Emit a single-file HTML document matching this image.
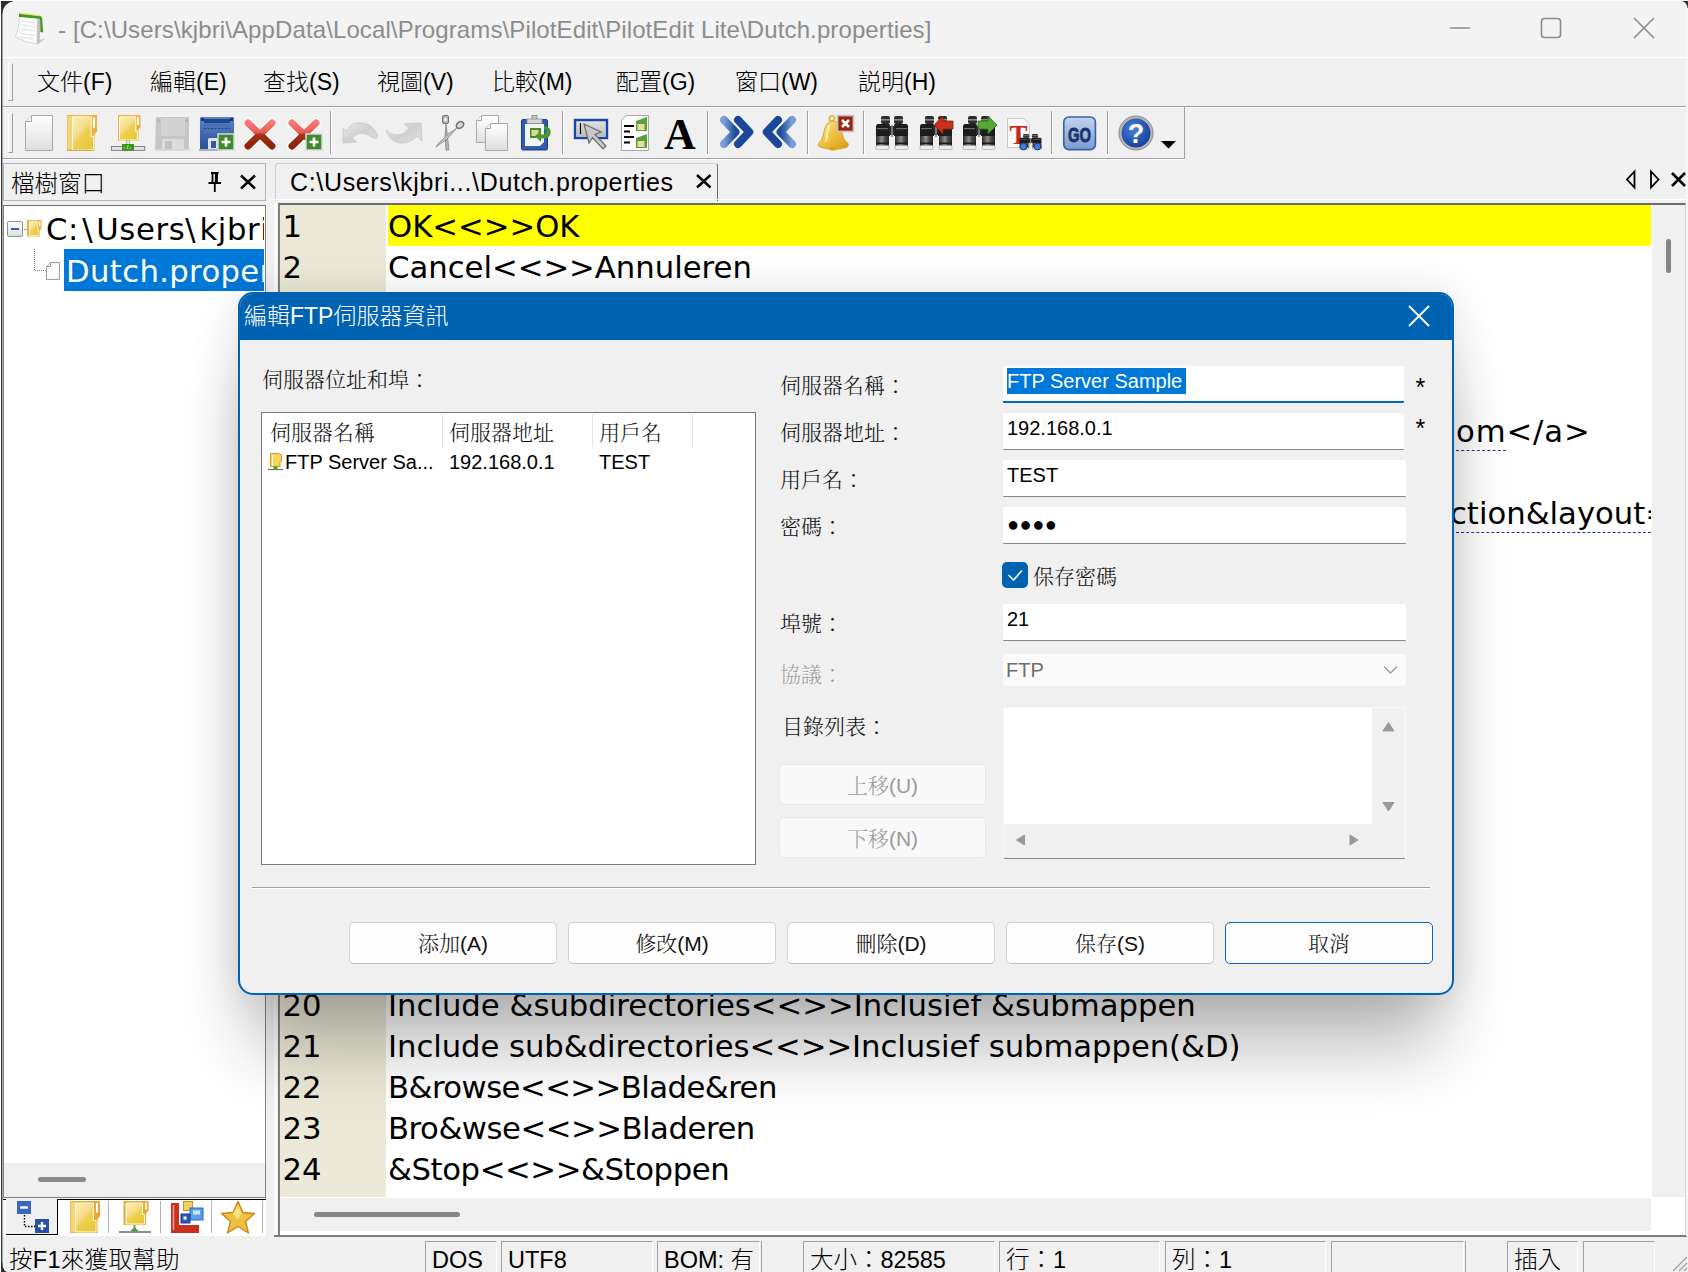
<!DOCTYPE html>
<html lang="zh-Hant">
<head>
<meta charset="utf-8">
<title>PilotEdit Lite - Dutch.properties</title>
<style>
*{box-sizing:border-box;margin:0;padding:0}
html,body{width:1688px;height:1272px;overflow:hidden;background:#f0f0f0}
body{position:relative;font-family:"Liberation Sans","Noto Sans CJK TC",sans-serif;color:#000;font-size:24px}
#win{position:absolute;left:0;top:0;width:1688px;height:1272px;overflow:hidden}
#win div,#win span.a,#win svg{position:absolute;white-space:pre}
#win svg{overflow:visible}
.r{position:absolute}
/* title bar */
#titlebar{left:0;top:0;width:1688px;height:57px;background:#f3f3f3}
#title{left:58px;top:16px;font-size:24px;letter-spacing:0.11px;color:#8c8c8c;line-height:28px}
#menubar{left:0;top:58px;width:1688px;height:48px;background:#f0f0f0}
.mi{top:67px;font-size:23px;line-height:30px;color:#000;font-weight:300}
.ed{font-family:"DejaVu Sans","Noto Sans CJK TC",sans-serif;font-size:30.7px;letter-spacing:0px;line-height:42px;height:42px;color:#000}
.dl{font-family:"Liberation Sans","Noto Serif CJK TC","Noto Serif CJK SC","Noto Sans CJK TC",serif;font-weight:300;font-size:21px;line-height:30px;color:#111}
.tah{font-family:"Liberation Sans","Noto Sans CJK TC",sans-serif;font-size:20px;line-height:26px;color:#000}
.st{top:1245px;font-size:23.5px;line-height:30px;color:#000;font-weight:300}
.pane{top:1241px;height:31px;border-left:1px solid #a0a0a0;border-top:1px solid #a0a0a0;border-right:1px solid #fff}
.sep{top:111px;width:2px;height:43px;border-left:1px solid #a0a0a0;border-right:1px solid #fff}
.inp{background:#fff;border-bottom:1px solid #868686;border-radius:2px 2px 1px 1px}
.btn{height:42px;width:208px;top:922px;background:#fdfdfd;border:1px solid #d2d2d2;border-bottom-color:#bdbdbd;border-radius:5px;text-align:center}
.btn span,.dbtn span{position:relative;top:1px;font-family:"Liberation Sans","Noto Serif CJK TC","Noto Serif CJK SC","Noto Sans CJK TC",serif;font-weight:300;font-size:21px;line-height:39px;color:#111}
.dbtn{height:41px;width:207px;left:779px;background:#f9f9f9;border:1px solid #e8e8e8;border-radius:5px;text-align:center}
.dbtn span{color:#9a9a9a}
</style>
</head>
<body>
<div id="win">
<!-- window chrome -->
<div id="titlebar"></div>
<svg style="left:0;top:0" width="60" height="57" viewBox="0 0 60 57">
  <path d="M38 40 L45.500 38.500 L38.500 44.300 Z" fill="#cfcfcf"/>
  <path d="M19.400 16 L37.600 18 L37 44 Q26 43 15.300 36.600 Q19 30 19.400 16 Z" fill="#fdfdfd" stroke="#c4c4c4" stroke-width="0.700"/>
  <path d="M37.600 18 L40.200 17 L39.600 42.300 L37 44 Z" fill="#bdbdbd"/>
  <path d="M21.500 21 L26 21.500 L31 22.400 L35 23 M21.500 24.800 L27 25.600 L35 26.800 M21 29 L25 29.500 L30 30.400 L35 31 M20 33 L25 34 L35 35.500 M19.500 36.500 L25 37.600 L34 38.600" stroke="#d4d4d4" stroke-width="0.800" fill="none"/>
  <path d="M19 13.600 L40.800 16 L41 19 L37.600 18.600 L19 16.900 Z" fill="#3f9a22"/>
  <path d="M20 12.600 L40 15 L40 16.200 L20 13.900 Z" fill="#f0e070"/>
  <path d="M40 16.400 L42 17.200 L43.200 32.600 L40.400 32 Z" fill="#3f9a22"/>
</svg>
<div id="title">- [C:\Users\kjbri\AppData\Local\Programs\PilotEdit\PilotEdit Lite\Dutch.properties]</div>
<svg style="left:1440px;top:10px" width="230" height="40" viewBox="0 0 230 40" fill="none" stroke="#8a8a8a" stroke-width="1.6" stroke-linecap="round" stroke-linejoin="round">
  <path d="M10.5 18 H29.5"/>
  <rect x="101.5" y="8.5" width="19" height="19" rx="3"/>
  <path d="M194.5 8.5 L213.5 27.5 M213.5 8.5 L194.5 27.5"/>
</svg>
<div style="left:0;top:57px;width:1688px;height:1px;background:#fff"></div>
<div id="menubar"></div>
<div style="left:8px;top:63px;width:5px;height:38px;border:1px solid #fff;border-right-color:#a0a0a0;border-bottom-color:#a0a0a0"></div>
<div class="mi" style="left:37px">文件(F)</div>
<div class="mi" style="left:150px">編輯(E)</div>
<div class="mi" style="left:263px">查找(S)</div>
<div class="mi" style="left:377px">視圖(V)</div>
<div class="mi" style="left:492px">比較(M)</div>
<div class="mi" style="left:616px">配置(G)</div>
<div class="mi" style="left:735px">窗口(W)</div>
<div class="mi" style="left:858px">説明(H)</div>
<div style="left:0;top:106px;width:1688px;height:1px;background:#a0a0a0"></div>
<div style="left:0;top:107px;width:1688px;height:1px;background:#fff"></div>
<!-- window left/right edge -->
<!-- toolbar -->
<div style="left:0;top:158px;width:1185px;height:1px;background:#a0a0a0"></div>
<div style="left:0;top:159px;width:1185px;height:1px;background:#fff"></div>
<div style="left:1184px;top:107px;width:1px;height:52px;background:#a0a0a0"></div>
<div style="left:8px;top:113px;width:5px;height:40px;border:1px solid #fff;border-right-color:#a0a0a0;border-bottom-color:#a0a0a0"></div>
<div class="sep" style="left:330px"></div>
<div class="sep" style="left:562px"></div>
<div class="sep" style="left:707px"></div>
<div class="sep" style="left:807px"></div>
<div class="sep" style="left:863px"></div>
<div class="sep" style="left:1051px"></div>
<div class="sep" style="left:1107px"></div>
<svg style="left:0;top:107px" width="1190" height="52" viewBox="0 107 1190 52">
<defs>
<linearGradient id="gpage" x1="0" y1="0" x2="0" y2="1"><stop offset="0" stop-color="#ffffff"/><stop offset="1" stop-color="#dedede"/></linearGradient>
<linearGradient id="gfold" x1="0" y1="0" x2="1" y2="1"><stop offset="0" stop-color="#fdf0a0"/><stop offset="0.5" stop-color="#f3d868"/><stop offset="1" stop-color="#e4bc38"/></linearGradient>
<linearGradient id="gfold2" x1="0" y1="0" x2="0.7" y2="1"><stop offset="0" stop-color="#f9f2a8"/><stop offset="0.45" stop-color="#f5dc90"/><stop offset="0.62" stop-color="#eed050"/><stop offset="1" stop-color="#e6c838"/></linearGradient>
<linearGradient id="gred" x1="0" y1="0" x2="0" y2="1"><stop offset="0" stop-color="#f67878"/><stop offset="0.42" stop-color="#e85a50"/><stop offset="0.5" stop-color="#a63418"/><stop offset="1" stop-color="#8c2408"/></linearGradient>
<linearGradient id="gblue" x1="0" y1="0" x2="0" y2="1"><stop offset="0" stop-color="#5a84c8"/><stop offset="1" stop-color="#2c4f98"/></linearGradient>
<linearGradient id="ggrey" x1="0" y1="0" x2="0" y2="1"><stop offset="0" stop-color="#e0e0e0"/><stop offset="1" stop-color="#bcbcbc"/></linearGradient>
<linearGradient id="gchev" x1="0" y1="0" x2="1" y2="0"><stop offset="0" stop-color="#7aa0d8"/><stop offset="1" stop-color="#1c4a9c"/></linearGradient>
<linearGradient id="gchev2" x1="1" y1="0" x2="0" y2="0"><stop offset="0" stop-color="#7aa0d8"/><stop offset="1" stop-color="#1c4a9c"/></linearGradient>
<linearGradient id="gbell" x1="0" y1="0" x2="1" y2="1"><stop offset="0" stop-color="#fce8a0"/><stop offset="0.5" stop-color="#f0c040"/><stop offset="1" stop-color="#d89818"/></linearGradient>
<linearGradient id="gbin" x1="0" y1="0" x2="0" y2="1"><stop offset="0" stop-color="#2a2a2a"/><stop offset="0.6" stop-color="#484848"/><stop offset="0.8" stop-color="#b0b0b0"/><stop offset="1" stop-color="#e8e8e8"/></linearGradient>
<linearGradient id="gundo" x1="0" y1="0" x2="1" y2="1"><stop offset="0" stop-color="#ececec"/><stop offset="0.5" stop-color="#d0d0d0"/><stop offset="1" stop-color="#e0e0e0"/></linearGradient>
<linearGradient id="gbar" x1="0" y1="0" x2="1" y2="0"><stop offset="0" stop-color="#2c2c2c"/><stop offset="0.45" stop-color="#8c8c8c"/><stop offset="0.7" stop-color="#4a4a4a"/><stop offset="1" stop-color="#262626"/></linearGradient>
<linearGradient id="ggo" x1="0" y1="0" x2="0" y2="1"><stop offset="0" stop-color="#c4d4ec"/><stop offset="1" stop-color="#7c9cd0"/></linearGradient>
<radialGradient id="ghelp" cx="0.4" cy="0.35" r="0.7"><stop offset="0" stop-color="#4a80d8"/><stop offset="1" stop-color="#143c98"/></radialGradient>
<g id="bino">
 <rect x="6" y="1" width="9" height="8" rx="2" fill="#2c2c2c"/><rect x="19" y="1" width="9" height="8" rx="2" fill="#2c2c2c"/>
 <rect x="6" y="4" width="9" height="1.6" fill="#8a8a8a"/><rect x="19" y="4" width="9" height="1.6" fill="#8a8a8a"/>
 <path d="M3 9 H14 Q15 9 15 11 V21 H1 V12 Q1 9 3 9 Z" fill="#1c1c1c"/><path d="M20 9 H31 Q33 9 33 12 V21 H19 V11 Q19 9 20 9 Z" fill="#1c1c1c"/>
 <rect x="14" y="11" width="6" height="9" fill="#2a2a2a"/><rect x="16.2" y="10" width="1.6" height="12" fill="#8c8c8c"/>
 <rect x="2" y="13" width="11" height="1.2" fill="#6a6a6a"/><rect x="21" y="13" width="11" height="1.2" fill="#6a6a6a"/>
 <rect x="1" y="21" width="13" height="13" fill="url(#gbar)"/><rect x="20" y="21" width="13" height="13" fill="url(#gbar)"/>
 <rect x="1" y="27.5" width="13" height="1.6" fill="#1c1c1c"/><rect x="20" y="27.5" width="13" height="1.6" fill="#1c1c1c"/>
 <rect x="1" y="30.5" width="13" height="4" rx="1" fill="#ececec" stroke="#9c9c9c" stroke-width="0.6"/><rect x="20" y="30.5" width="13" height="4" rx="1" fill="#ececec" stroke="#9c9c9c" stroke-width="0.6"/>
</g>
<g id="plus"><rect x="0" y="0" width="16" height="16" fill="#3f8a2e" stroke="#d8d8d8" stroke-width="1.5"/><path d="M8 3.5 V12.5 M3.5 8 H12.5" stroke="#fff" stroke-width="2.6"/></g>
<g id="redx"><path d="M4 5 L28 28 M28 5 L4 28" stroke="#fff" stroke-width="10" stroke-linecap="round" opacity="0.85"/><path d="M4 5 L28 28 M28 5 L4 28" stroke="url(#gred)" stroke-width="7" stroke-linecap="round"/></g>
</defs>
<path d="M31.5 115.5 H52.5 V150.5 H25.5 V121.5 Z" fill="url(#gpage)" stroke="#a8a8a8"/><path d="M25.5 121.5 H31.5 V115.5" fill="#f4f4f4" stroke="#a8a8a8"/>
<path d="M67 115 H97 V131.5 L94.5 134 V150.5 H67 Z" fill="#eeb040"/><path d="M67.5 116 H72.5 V150 H67.5 Z" fill="#f6d47c"/><path d="M72.5 116.8 H91.2 V136.3 H93.6 V149.8 H72.5 Z" fill="url(#gfold2)" stroke="#fffbe0" stroke-width="1"/><rect x="93" y="117.5" width="2" height="10.5" fill="#fff"/><path d="M67 150.3 H94" stroke="#b08838" stroke-width="0.8"/>
<path d="M118 115 H140.5 V127.5 L138.5 129.5 V141 H118 Z" fill="#eeb040"/><path d="M119.5 116.8 H135.8 V131.3 H137.4 V140 H119.5 Z" fill="url(#gfold2)" stroke="#fffbe0" stroke-width="1"/><rect x="137.2" y="117" width="1.6" height="8" fill="#fff"/><rect x="126.3" y="141" width="3.4" height="5" fill="#f4f4f4" stroke="#a0a0a0" stroke-width="0.6"/><rect x="111.4" y="146.4" width="33.4" height="3.9" fill="#e4e4e4" stroke="#6a6a6a" stroke-width="0.8"/><rect x="122" y="144" width="12" height="6.7" fill="#3c9420"/><path d="M127.9 142.5 V149 M123.5 148 H132.5" stroke="#d0e870" stroke-width="1.2" stroke-dasharray="1.5 1.5"/>
<path d="M156 117 H189 V149 H155 Z" fill="#c6c6c6"/><rect x="161" y="118" width="24" height="18" fill="#d2d2d2"/><rect x="162" y="139" width="22" height="11" rx="2" fill="#dcdcdc"/><rect x="165" y="141" width="7" height="8" fill="#c2c2c2"/><rect x="157" y="119" width="3" height="3" fill="#b4b4b4"/><rect x="185" y="119" width="3" height="3" fill="#b4b4b4"/><path d="M155 150 H190" stroke="#d4d4d4" stroke-width="1.5"/>
<path d="M201 117 H233 Q234 117 234 118 V149 H200 V118 Q200 117 201 117 Z" fill="url(#gblue)"/><rect x="204" y="119" width="26" height="4" fill="#24458c"/><rect x="204" y="124" width="26" height="9" fill="#4870b4"/><path d="M204 128.5 H230" stroke="#24458c" stroke-width="1" stroke-dasharray="2 1.5"/><rect x="201" y="118" width="3" height="3" fill="#1c3878"/><rect x="230" y="118" width="3" height="3" fill="#1c3878"/><rect x="208" y="138" width="13" height="12" rx="1.5" fill="#dfe3ea"/><rect x="211" y="141" width="5" height="7" fill="#38589c"/><path d="M199 150 H222" stroke="#8a9cc0" stroke-width="1.5"/>
<use href="#plus" x="218" y="134"/>
<use href="#redx" x="244" y="118"/>
<use href="#redx" x="288" y="118"/><use href="#plus" x="306" y="134"/>
<path d="M343 128 L343 143 L357 142 L352 138 Q360 129 372 137 Q376 140 378 136 Q372 121 356 123 Q349 125 347 131 Z" fill="url(#gundo)" stroke="#c8c8c8" stroke-width="0.8"/>
<path d="M421 123 L422 141 L417 136 Q408 146 396 142 Q389 139 386 130 Q389 134 396 135 Q405 135 409 128 L404 124 Z" fill="url(#gundo)" stroke="#c8c8c8" stroke-width="0.8"/>
<rect x="442.5" y="115.5" width="6" height="8" rx="1.5" fill="#b8b8b8" stroke="#707070"/><rect x="444.5" y="118" width="2" height="3" fill="#fff"/><ellipse cx="460" cy="125" rx="4" ry="3" transform="rotate(-35 460 125)" fill="#d8d8d8" stroke="#707070" stroke-width="1.6"/><path d="M446 124 L447.5 136 L449 150 L446 150 L445 137 Z" fill="#b0b0b0" stroke="#808080" stroke-width="0.7"/><path d="M457 128 L448 134 L437 145 L436 147 L447 139 Z" fill="#c0c0c0" stroke="#808080" stroke-width="0.7"/>
<path d="M481.5 115.5 H498.5 V142.5 H476.5 V120.5 Z" fill="url(#gpage)" stroke="#a8a8a8"/><path d="M476.5 120.5 H481.5 V115.5" fill="#f4f4f4" stroke="#a8a8a8"/><path d="M490.5 123.5 H507.5 V150.5 H485.5 V128.5 Z" fill="url(#gpage)" stroke="#a8a8a8"/><path d="M485.5 128.5 H490.5 V123.5" fill="#f4f4f4" stroke="#a8a8a8"/>
<rect x="521.5" y="119.5" width="26" height="30.5" rx="1.5" fill="#2f5cab" stroke="#1c3c84"/><rect x="532" y="115.5" width="5" height="4" fill="#c8c8c8" stroke="#808080" stroke-width="0.8"/><rect x="527" y="119" width="15" height="4.5" fill="#d8d8d8" stroke="#909090" stroke-width="0.8"/><path d="M525 124 H544 V142 L540 146 H525 Z" fill="#f4f4f4"/><rect x="530" y="128" width="11" height="10" fill="#4a8c28"/><rect x="531.5" y="130" width="7" height="6" fill="#d8d8a0"/><path d="M544 126 Q552 127 550.5 134 Q549 139 541 138.5 L541 142 L535 136 L541 131 L541 134.5 Q546 135 546.5 132 Q547 129 544 129 Z" fill="#4a9a28"/>
<rect x="575" y="120" width="32" height="18" fill="#d8dce4" stroke="#1846a8" stroke-width="2.4"/><rect x="577" y="122" width="28" height="14" fill="url(#ggrey)"/><path d="M580.5 123 V134" stroke="#000" stroke-width="1.2"/><path d="M584 124 L601 132 L595 134.5 L606 146 L603 149 L592.5 137.5 L589 143 Z" fill="#c8c8c8" stroke="#6c6c6c" stroke-width="1.2"/>
<path d="M626 115.5 H648.5 V150.5 H621.5 V120.5 Z" fill="#fdfdfd" stroke="#a8a8a8"/><path d="M624 126 H634 M624 131.5 H630 M624 137 H634 M624 142.5 H630" stroke="#000" stroke-width="2"/><path d="M636 121 L647 117 V131 H636 Z" fill="#58a038"/><path d="M636 138 L647 134 V148 H636 Z" fill="#58a038"/><rect x="637.5" y="124" width="7" height="6" fill="#e8dca0"/><rect x="637.5" y="141" width="7" height="6" fill="#e8dca0"/>
<text x="680" y="149" text-anchor="middle" font-family="Liberation Serif,serif" font-weight="bold" font-size="44" fill="#000">A</text>
<path d="M724 120 L735.5 132 L724 144" fill="none" stroke="url(#gchev)" stroke-width="8" stroke-linecap="round" stroke-linejoin="round"/><path d="M738 120 L749.3 132 L738 144" fill="none" stroke="#1c4698" stroke-width="8" stroke-linecap="round" stroke-linejoin="round"/>
<path d="M792 120 L780.5 132 L792 144" fill="none" stroke="url(#gchev2)" stroke-width="8" stroke-linecap="round" stroke-linejoin="round"/><path d="M778 120 L766.7 132 L778 144" fill="none" stroke="#1c4698" stroke-width="8" stroke-linecap="round" stroke-linejoin="round"/>
<circle cx="832" cy="118.5" r="2.6" fill="none" stroke="#e8b838" stroke-width="1.8"/><path d="M827 124 Q832 119 837 122.500 Q841 126 842.500 135 Q843.500 140 848 143.500 Q849.500 146 846 147.500 Q833 151.500 820 147 Q817 145.500 818.500 143.500 Q822.500 140 823.500 134 Q824.500 127 827 124 Z" fill="url(#gbell)" stroke="#d8981c" stroke-width="0.8"/><path d="M829 125 Q827 133 826 142" stroke="#fff6c8" stroke-width="2" fill="none" opacity="0.8"/><ellipse cx="833" cy="148.5" rx="4" ry="2" fill="#e0a020"/><rect x="837.6" y="115.600" width="15.8" height="15.8" fill="#9c2410" stroke="#c4c4c4" stroke-width="1.6"/><path d="M842 120 L849 127 M849 120 L842 127" stroke="#fff" stroke-width="2.8"/>
<use href="#bino" x="875" y="115"/>
<use href="#bino" x="919" y="115"/><path d="M934 125 L943 116 V121 H953 V129 H943 V134 Z" fill="#c83020" stroke="#8c1808" stroke-width="0.8"/>
<use href="#bino" x="962" y="115"/><path d="M997 125 L988 116 V121 H978 V129 H988 V134 Z" fill="#58a838" stroke="#2c7018" stroke-width="0.8"/>
<path d="M1007.5 118.500 H1023.500 L1029.500 124.500 V147.500 H1007.500 Z" fill="#fafafa" stroke="#c8c8c8"/><text x="1018.5" y="143.500" text-anchor="middle" font-family="Liberation Serif,serif" font-weight="bold" font-size="27" fill="#c42818">T</text><g transform="translate(1019,133.500) scale(0.68 0.46)"><use href="#bino"/></g><circle cx="1023.5" cy="146.500" r="3.4" fill="#3c80d8" stroke="#183c78"/><circle cx="1037.5" cy="146.500" r="3.4" fill="#3c80d8" stroke="#183c78"/>
<rect x="1063.8" y="117" width="31.6" height="32.600" rx="5" fill="url(#ggo)" stroke="#3460a8" stroke-width="1.6"/><text x="1079.6" y="141.500" text-anchor="middle" font-family="Liberation Sans,sans-serif" font-weight="bold" font-size="21" fill="#1c3470" stroke="#1c3470" stroke-width="0.9" textLength="23" lengthAdjust="spacingAndGlyphs">GO</text>
<circle cx="1136" cy="133" r="17" fill="#b8b8b8" stroke="#888" stroke-width="1"/><circle cx="1136" cy="133" r="14.5" fill="url(#ghelp)"/><text x="1136" y="143" text-anchor="middle" font-family="Liberation Sans,sans-serif" font-weight="bold" font-size="27" fill="#fff">?</text>
<path d="M1161 141 H1176 L1168.5 148.5 Z" fill="#000"/>
</svg>
<!-- left panel: file tree -->
<div style="left:3px;top:163px;width:263px;height:38px;border:1px solid #b4b4b4;background:#f0f0f0"></div>
<div style="left:11px;top:168.5px;font-size:23.5px;line-height:30px;font-weight:300">檔樹窗口</div>
<svg style="left:204px;top:170px" width="56" height="24" viewBox="204 170 56 24" fill="none" stroke="#000">
  <path d="M211 173 H218.5 M212.5 173 V182.5 M217 173 V182.5 M215.8 173 V182.5 M208.5 183 H221 M214.8 183.5 V192" stroke-width="1.8"/>
  <path d="M241 175.5 L255 188.5 M255 175.5 L241 188.5" stroke-width="2.4"/>
</svg>
<div style="left:3px;top:205px;width:263px;height:993px;border:1px solid #828282;border-top-color:#6e6e6e;background:#fff"></div>
<div style="left:4px;top:1163px;width:261px;height:34px;background:#f0f0f0"></div>
<div style="left:38px;top:1177px;width:48px;height:5px;border-radius:3px;background:#8a8a8a"></div>
<!-- tree items -->
<svg style="left:4px;top:215px" width="62" height="70" viewBox="4 215 62 70">
  <defs><linearGradient id="tbx" x1="0" y1="0" x2="0" y2="1"><stop offset="0" stop-color="#ffffff"/><stop offset="1" stop-color="#dcdcdc"/></linearGradient><linearGradient id="tf2" x1="0" y1="0" x2="0.7" y2="1"><stop offset="0" stop-color="#f9f2a8"/><stop offset="0.45" stop-color="#f5dc90"/><stop offset="0.62" stop-color="#eed050"/><stop offset="1" stop-color="#e6c838"/></linearGradient><linearGradient id="tf" x1="0" y1="0" x2="1" y2="1"><stop offset="0" stop-color="#fdf0a0"/><stop offset="1" stop-color="#e4b838"/></linearGradient></defs>
  <path d="M22 229.5 H27 M34.5 249 V270.5 H46" stroke="#808080" stroke-width="1" stroke-dasharray="1 1" fill="none"/>
  <rect x="7.500" y="221.500" width="15" height="15" rx="1.500" fill="url(#tbx)" stroke="#919191"/>
  <path d="M11 229 H19" stroke="#3c5cb4" stroke-width="2"/>
  <path d="M27 220 H41.500 V228.500 L40 230 V236.500 H27 Z" fill="#eeb040"/>
  <path d="M29.500 221.500 H37.800 V230.300 H39 V235.500 H29.500 Z" fill="url(#tf2)" stroke="#fffbe0" stroke-width="0.800"/>
  <rect x="39.200" y="221.500" width="1.200" height="5" fill="#fff"/>
  <path d="M50.500 262.500 H59.500 V279.500 H46.500 V266.500 Z" fill="#fafafa" stroke="#9a9a9a"/>
  <path d="M46.500 266.500 H50.500 V262.500" fill="#eee" stroke="#9a9a9a"/>
</svg>
<div class="ed" style="left:46px;top:209px;width:218px;overflow:hidden;letter-spacing:0.6px">C<span style="margin-right:3.2px">:</span><span style="margin-right:3.2px">\</span>Users<span style="margin-right:3.2px">\</span>kjbri</div>
<div style="left:64px;top:249px;width:200px;height:42px;background:#0078d7"></div>
<div class="ed" style="left:66px;top:251px;width:198px;overflow:hidden;color:#fff;letter-spacing:0.35px">Dutch.properties</div>
<!-- bottom tabs of tree panel -->
<div style="left:4px;top:1199px;width:262px;height:37px;background:#fff"></div>
<div style="left:6px;top:1199px;width:52px;height:36px;border-bottom:1px solid #000;border-right:1px solid #000;background:#f0f0f0"></div><div style="left:2px;top:1199px;width:4px;height:1px;background:#000"></div>
<div style="left:57px;top:1199px;width:209px;height:1px;background:#000"></div>
<div style="left:108px;top:1201px;width:1px;height:32px;background:#b0b0b0"></div>
<div style="left:160px;top:1201px;width:1px;height:32px;background:#b0b0b0"></div>
<div style="left:211px;top:1201px;width:1px;height:32px;background:#b0b0b0"></div>
<div style="left:262px;top:1201px;width:1px;height:32px;background:#b0b0b0"></div>
<svg style="left:0;top:1198px" width="270" height="38" viewBox="0 1198 270 38">
  <rect x="17" y="1201" width="14" height="13" fill="#3868c0"/><path d="M20 1207.500 H28" stroke="#fff" stroke-width="2.400"/>
  <path d="M24.500 1215 V1226.500 H35" stroke="#000" stroke-width="1.400" stroke-dasharray="1.500 1.500" fill="none"/>
  <rect x="35" y="1219" width="14" height="14" fill="#2c50a8"/><path d="M38 1226 H46 M42 1222 V1230" stroke="#fff" stroke-width="2.400"/>
  <path d="M70 1201 H100 V1216.500 L97.500 1219 V1233 H70 Z" fill="#e8a838"/>
  <path d="M70.500 1202 H75 V1232.500 H70.500 Z" fill="#f6d47c"/>
  <path d="M75.500 1203 H93.500 V1220.500 H96 V1232 H75.500 Z" fill="url(#tf2)" stroke="#fffbe0" stroke-width="1"/>
  <rect x="96" y="1203" width="2" height="9.500" fill="#fff"/>
  <path d="M123.500 1201 H148.500 V1211 L146 1213.500 V1225 H123.500 Z" fill="#e8a838"/>
  <path d="M126 1203 H142.500 V1214.500 H144.500 V1224 H126 Z" fill="url(#tf2)" stroke="#fffbe0" stroke-width="1"/>
  <rect x="145" y="1202.500" width="1.800" height="7" fill="#fff"/>
  <path d="M119 1232 H151" stroke="#707070" stroke-width="1.600"/><path d="M134.500 1225 V1231" stroke="#909090" stroke-width="2"/><path d="M130.500 1231 L134.500 1227 L138.500 1231 Z" fill="#48a028"/>
  <path d="M171 1203 H179 V1225 H199 V1233 H171 Z" fill="#c83020"/><path d="M173.500 1205 V1230" stroke="#f0a090" stroke-width="1.500"/>
  <rect x="183.500" y="1201.500" width="9" height="9" fill="#f0d060" stroke="#c89020"/>
  <rect x="190" y="1208" width="13" height="12" fill="#58a0e8" stroke="#2c68c0"/><rect x="193" y="1210.500" width="7" height="4" fill="#d0e8ff"/>
  <rect x="181" y="1214" width="9" height="9" fill="#2c58c0" stroke="#183c90"/><rect x="183.500" y="1216.500" width="3" height="3" fill="#fff"/>
  <path d="M238 1201.500 L243 1212.500 L254.500 1213.500 L245.500 1221.500 L248.500 1233 L238 1226.500 L227.500 1233 L230.500 1221.500 L221.500 1213.500 L233 1212.500 Z" fill="#f0c040" stroke="#c88818" stroke-width="1.400" stroke-linejoin="round"/>
  <path d="M238 1205 L241.500 1213.500 L238 1220 L233 1214 Z" fill="#fbe690" opacity="0.800"/>
</svg>
<!-- document tab -->
<div style="left:275px;top:163px;width:443px;height:38px;border:1px solid #d0d0d0;border-right:1px solid #6c6c6c;border-bottom:none;background:#f0f0f0;border-radius:3px 3px 0 0"></div>
<div style="left:290px;top:167px;font-size:25px;letter-spacing:0.66px;line-height:30px">C:\Users\kjbri...\Dutch.properties</div>
<svg style="left:690px;top:170px" width="26" height="24" viewBox="690 170 26 24" fill="none" stroke="#000">
  <path d="M697 175 L710.500 187.500 M710.500 175 L697 187.500" stroke-width="2.400"/>
</svg>
<svg style="left:1620px;top:166px" width="68" height="28" viewBox="1620 166 68 28" fill="none" stroke="#000">
  <path d="M1634.500 171.500 V187.500 L1627 179.500 Z" stroke-width="1.800" stroke-linejoin="miter"/>
  <path d="M1651 171.500 V187.500 L1658.500 179.500 Z" stroke-width="1.800" stroke-linejoin="miter"/>
  <path d="M1672 173 L1685 186 M1685 173 L1672 186" stroke-width="2.600"/>
</svg>
<div style="left:270px;top:199px;width:1418px;height:1px;background:#fff"></div>
<!-- editor -->
<div style="left:278px;top:203px;width:1408px;height:1033px;border:2px solid #808080;border-right:1px solid #d4d4d4;border-bottom:1px solid #fff;border-top-color:#6c6c6c;background:#fff"></div>
<div style="left:274px;top:1235px;width:1413px;height:2px;background:#7c7c7c"></div><div style="left:274px;top:203px;width:3px;height:1032px;background:#fbfbfb"></div>
<div style="left:280px;top:205px;width:106px;height:992px;background:#ece9d8"></div>
<div style="left:388px;top:205px;width:1263px;height:41px;background:#ffff00"></div>
<!-- vertical scrollbar -->
<div style="left:1652px;top:205px;width:33px;height:992px;background:#f0f0f0"></div>
<div style="left:1666px;top:239px;width:5px;height:34px;border-radius:3px;background:#858585"></div>
<!-- horizontal scrollbar -->
<div style="left:280px;top:1198px;width:1371px;height:33px;background:#f0f0f0"></div>
<div style="left:314px;top:1212px;width:146px;height:5px;border-radius:3px;background:#858585"></div>

<!-- line numbers -->
<div class="ed" style="left:282.5px;top:206px">1</div>
<div class="ed" style="left:282.5px;top:247px">2</div>
<div class="ed" style="left:282.5px;top:985px">20</div>
<div class="ed" style="left:282.5px;top:1026px">21</div>
<div class="ed" style="left:282.5px;top:1067px">22</div>
<div class="ed" style="left:282.5px;top:1108px">23</div>
<div class="ed" style="left:282.5px;top:1149px">24</div>
<!-- text lines -->
<div class="ed" style="left:388px;top:206px">OK&lt;&lt;&gt;&gt;OK</div>
<div class="ed" style="left:388px;top:247px">Cancel&lt;&lt;&gt;&gt;Annuleren</div>
<div class="ed" style="left:1456px;top:411px;letter-spacing:0.9px">om&lt;/a&gt;</div>
<div style="left:1456px;top:450px;width:50px;height:0;border-top:1px dashed #2030a0"></div>
<div class="ed" style="left:1450px;top:493px;width:201px;overflow:hidden">ction&amp;layout=</div>
<div style="left:1456px;top:532px;width:195px;height:0;border-top:1px dashed #2030a0"></div>
<div class="ed" style="left:388px;top:985px">Include &amp;subdirectories&lt;&lt;&gt;&gt;Inclusief &amp;submappen</div>
<div class="ed" style="left:388px;top:1026px;letter-spacing:-0.06px">Include sub&amp;directories&lt;&lt;&gt;&gt;Inclusief submappen(&amp;D)</div>
<div class="ed" style="left:388px;top:1067px;letter-spacing:-0.53px">B&amp;rowse&lt;&lt;&gt;&gt;Blade&amp;ren</div>
<div class="ed" style="left:388px;top:1108px;letter-spacing:-0.46px">Bro&amp;wse&lt;&lt;&gt;&gt;Bladeren</div>
<div class="ed" style="left:388px;top:1149px;letter-spacing:-0.4px">&amp;Stop&lt;&lt;&gt;&gt;&amp;Stoppen</div>
<!-- status bar -->
<div style="left:0;top:1237px;width:1688px;height:35px;background:#f0f0f0"></div>
<div class="st" style="left:9px;letter-spacing:0.3px">按F1來獲取幫助</div>
<div class="pane" style="left:425px;width:72px"></div>
<div class="st" style="left:432px">DOS</div>
<div class="pane" style="left:501px;width:152px"></div>
<div class="st" style="left:508px">UTF8</div>
<div class="pane" style="left:657px;width:103px"></div>
<div style="left:761px;top:1241px;width:1px;height:31px;background:#a0a0a0"></div>
<div class="st" style="left:664px">BOM: 有</div>
<div class="pane" style="left:803px;width:192px"></div>
<div class="st" style="left:810px">大小：82585</div>
<div class="pane" style="left:999px;width:161px"></div>
<div class="st" style="left:1006px">行：1</div>
<div class="pane" style="left:1165px;width:161px"></div>
<div class="st" style="left:1172px">列：1</div>
<div class="pane" style="left:1331px;width:133px"></div>
<div style="left:1465px;top:1241px;width:1px;height:31px;background:#a0a0a0"></div>
<div class="pane" style="left:1507px;width:71px"></div>
<div class="st" style="left:1514px">插入</div>
<div class="pane" style="left:1583px;width:72px"></div>
<svg style="left:1670px;top:1254px" width="18" height="18" viewBox="0 0 18 18" fill="none" stroke="#a0a0a0" stroke-width="1.200">
  <path d="M17 3 L3 17 M17 9 L9 17 M17 14 L14 17"/>
</svg>
<!-- window edges -->
<div style="left:0;top:0;width:1px;height:1272px;background:#fff"></div>
<div style="left:0;top:0;width:1688px;height:1px;background:#fbfbfb"></div>
<div style="left:1px;top:8px;width:1px;height:1258px;background:#3a3a3a"></div>
<div style="left:2px;top:8px;width:1px;height:1258px;background:#a8a8a8"></div>
<div style="left:1686px;top:8px;width:2px;height:1228px;background:#f6f6f6"></div>
<svg style="left:0;top:0" width="16" height="16" viewBox="0 0 16 16"><path d="M1 1 H14 Q3.500 2.500 2.200 14 H1 Z" fill="#2e2e2e"/></svg>
<svg style="left:1676px;top:0" width="12" height="12" viewBox="0 0 12 12"><path d="M12 1 H6 Q11 2.500 11.500 8 H12 Z" fill="#2e2e2e"/></svg>
<svg style="left:0;top:1260px" width="12" height="12" viewBox="0 0 12 12"><path d="M1 12 H7 Q2.500 10.500 2.200 2 H1 Z" fill="#2e2e2e"/></svg>
<!-- FTP dialog -->
<div id="dlg" style="left:238px;top:292px;width:1216px;height:703px;border-radius:15px;background:#f0f0f0;border:2px solid #0063b1;box-shadow:0 0 46px rgba(0,0,0,0.12),0 66px 72px -14px rgba(0,0,0,0.27);overflow:hidden">
  <div style="left:-2px;top:-2px;width:1216px;height:48px;background:#0063b1"></div>
</div>
<div style="left:244px;top:301px;font-size:23px;line-height:30px;color:#fff;font-weight:300">編輯FTP伺服器資訊</div>
<svg style="left:1400px;top:298px" width="40" height="36" viewBox="1400 298 40 36" fill="none" stroke="#fff" stroke-width="1.800">
  <path d="M1409 306 L1429 326 M1429 306 L1409 326"/>
</svg>
<!-- left side -->
<div class="dl" style="left:262px;top:365px">伺服器位址和埠：</div>
<div style="left:261px;top:412px;width:495px;height:453px;background:#fff;border:1px solid #7a7a7a"></div>
<div class="dl" style="left:270px;top:418px">伺服器名稱</div>
<div class="dl" style="left:449px;top:418px">伺服器地址</div>
<div class="dl" style="left:599px;top:418px">用戶名</div>
<div style="left:442px;top:414px;width:1px;height:33px;background:#e5e5e5"></div>
<div style="left:592px;top:414px;width:1px;height:33px;background:#e5e5e5"></div>
<div style="left:692px;top:414px;width:1px;height:33px;background:#e5e5e5"></div>
<svg style="left:266px;top:452px" width="18" height="20" viewBox="266 452 18 20">
  <path d="M270.500 453.500 H279.500 L281.500 455 V461 L280 462.500 V466.500 H270.500 Z" fill="#f3d460" stroke="#d09828"/>
  <path d="M272.500 455 V466" stroke="#fff8d0"/>
  <path d="M268 469.500 H283" stroke="#707070" stroke-width="1.200"/><rect x="273.500" y="466.500" width="4" height="3" fill="#48a028"/>
</svg>
<div class="tah" style="left:285px;top:449px">FTP Server Sa...</div>
<div class="tah" style="left:449px;top:449px">192.168.0.1</div>
<div class="tah" style="left:599px;top:449px">TEST</div>
<!-- right side labels -->
<div class="dl" style="left:780px;top:371px">伺服器名稱：</div>
<div class="dl" style="left:780px;top:418px">伺服器地址：</div>
<div class="dl" style="left:780px;top:465px">用戶名：</div>
<div class="dl" style="left:780px;top:512px">密碼：</div>
<div class="dl" style="left:780px;top:609px">埠號：</div>
<div class="dl" style="left:780px;top:660px;color:#a0a0a0;text-shadow:1px 1px 0 #fff">協議：</div>
<div class="dl" style="left:782px;top:712px">目錄列表：</div>
<!-- inputs -->
<div class="inp" style="left:1003px;top:366px;width:400.5px;height:37px;border-bottom:2px solid #0067c0"></div>
<div style="left:1007px;top:368px;width:179px;height:26px;background:#0078d7"></div>
<div class="tah" style="left:1007px;top:368px;color:#fff">FTP Server Sample</div>
<div class="tah" style="left:1415.5px;top:374px;font-size:25px">*</div>
<div class="inp" style="left:1003px;top:413px;width:400.5px;height:37px"></div>
<div class="tah" style="left:1007px;top:415px">192.168.0.1</div>
<div class="tah" style="left:1415.5px;top:415px;font-size:25px">*</div>
<div class="inp" style="left:1003px;top:460px;width:403px;height:37px"></div>
<div class="tah" style="left:1007px;top:462px">TEST</div>
<div class="inp" style="left:1003px;top:507px;width:403px;height:37px"></div>
<div class="tah" style="left:1007px;top:511px;letter-spacing:0.5px">●●●●</div>
<div style="left:1002px;top:562px;width:26px;height:26px;border-radius:5px;background:#0063b1"></div>
<svg style="left:1002px;top:562px" width="26" height="26" viewBox="0 0 26 26" fill="none" stroke="#fff" stroke-width="1.600" stroke-linecap="round" stroke-linejoin="round">
  <path d="M7 13.500 L11.500 18 L19.500 9"/>
</svg>
<div class="dl" style="left:1033px;top:562px">保存密碼</div>
<div class="inp" style="left:1003px;top:604px;width:403px;height:37px"></div>
<div class="tah" style="left:1007px;top:606px">21</div>
<div style="left:1003px;top:654px;width:403px;height:32px;background:#fafafa;border-radius:3px"></div>
<div class="tah" style="left:1006px;top:657px;color:#6d6d6d">FTP</div>
<svg style="left:1380px;top:662px" width="20" height="16" viewBox="1380 662 20 16" fill="none" stroke="#9a9a9a" stroke-width="1.300">
  <path d="M1384 666.500 L1390.500 673 L1397 666.500"/>
</svg>
<!-- directory list -->
<div style="left:1003px;top:707px;width:403px;height:152px;background:#f0f0f0;border:1px solid #f8f8f8;border-bottom:1px solid #868686;border-radius:3px"></div>
<div style="left:1004px;top:708px;width:368px;height:116px;background:#fff"></div>
<svg style="left:1003px;top:707px" width="403" height="152" viewBox="1003 707 403 152" fill="#9a9a9a">
  <path d="M1383 731 L1388.500 722.500 L1394 731 Z" stroke="#9a9a9a" stroke-width="1" stroke-linejoin="round"/>
  <path d="M1383 802.500 L1388.500 811 L1394 802.500 Z" stroke="#9a9a9a" stroke-width="1" stroke-linejoin="round"/>
  <path d="M1024.500 835 L1016.500 840 L1024.500 845 Z" stroke="#9a9a9a" stroke-width="1" stroke-linejoin="round"/>
  <path d="M1350 835 L1358 840 L1350 845 Z" stroke="#9a9a9a" stroke-width="1" stroke-linejoin="round"/>
</svg>
<div class="dbtn" style="top:764px"><span>上移(U)</span></div>
<div class="dbtn" style="top:817px"><span>下移(N)</span></div>
<!-- separator -->
<div style="left:252px;top:887px;width:1178px;height:1px;background:#a0a0a0"></div>
<div style="left:252px;top:888px;width:1178px;height:1px;background:#fff"></div>
<!-- buttons -->
<div class="btn" style="left:349px"><span>添加(A)</span></div>
<div class="btn" style="left:568px"><span>修改(M)</span></div>
<div class="btn" style="left:787px"><span>刪除(D)</span></div>
<div class="btn" style="left:1006px"><span>保存(S)</span></div>
<div class="btn" style="left:1225px;border:1.5px solid #0067c0"><span>取消</span></div>
</div>
</body>
</html>
